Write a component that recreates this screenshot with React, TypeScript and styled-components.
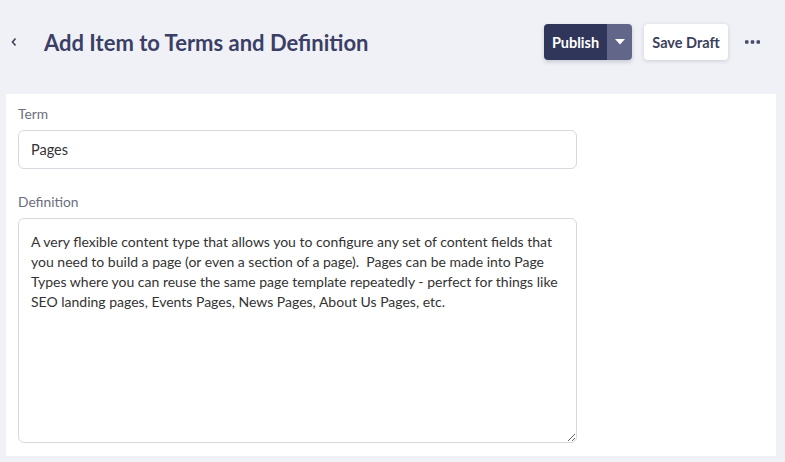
import React from "react";
import styled, { createGlobalStyle } from "styled-components";

const Global = createGlobalStyle`
  html, body { margin: 0; padding: 0; background: #f0f1f6; }
  body { font-family: "Lato", "Open Sans", sans-serif; }
`;

const Page = styled.div`
  width: 785px;
  height: 462px;
  background: #f0f1f6;
  display: flex;
  flex-direction: column;
  box-sizing: border-box;
  padding: 0 9px 6px 6px;
`;

const Header = styled.header`
  height: 94px;
  display: flex;
  align-items: center;
  padding: 0 16px 10px 4px;
  box-sizing: border-box;
`;

const Back = styled.button`
  background: none;
  border: 0;
  padding: 0;
  width: 12px;
  display: flex;
  align-items: center;
  color: #3b3f5c;
  cursor: pointer;
`;

const Title = styled.h1`
  margin: 0 0 0 22px;
  font-size: 22px;
  font-weight: 700;
  color: #3b3f66;
  flex: 1;
`;

const Actions = styled.div`
  display: flex;
  align-items: center;
  gap: 12px;
`;

const Split = styled.div`
  display: flex;
  height: 36px;
  border-radius: 4px;
  overflow: hidden;
  box-shadow: 0 2px 4px rgba(40, 45, 80, 0.2);
`;

const PublishBtn = styled.button`
  background: #2f3659;
  color: #fff;
  border: 0;
  font-family: inherit;
  font-weight: 700;
  font-size: 14.5px;
  padding: 0 6px;
  width: 63px;
`;

const Caret = styled.button`
  background: #62678a;
  border: 0;
  width: 25px;
  display: flex;
  align-items: center;
  justify-content: center;
  padding: 0;
`;

const DraftBtn = styled.button`
  height: 36px;
  width: 84px;
  background: #fff;
  border: 0;
  border-radius: 4px;
  box-shadow: 0 1px 4px rgba(40, 45, 80, 0.18);
  font-family: inherit;
  font-weight: 700;
  font-size: 14.5px;
  color: #3b3f5c;
  padding: 0;
`;

const More = styled.button`
  background: none;
  border: 0;
  padding: 0 0 0 5px;
  display: flex;
  align-items: center;
`;

const Panel = styled.main`
  flex: 1;
  background: #fff;
  padding: 12px 12px 0 12px;
  display: flex;
  flex-direction: column;
`;

const Field = styled.div<{ $gap?: number }>`
  display: flex;
  flex-direction: column;
  width: 559px;
  margin-bottom: ${(p) => p.$gap ?? 0}px;
`;

const Label = styled.label`
  font-size: 13.8px;
  line-height: 16px;
  color: #6b6e7d;
  margin-bottom: 8px;
`;

const Input = styled.input`
  height: 39px;
  box-sizing: border-box;
  border: 1px solid #d7d9df;
  border-radius: 6px;
  padding: 0 12px;
  font-family: inherit;
  font-size: 14.5px;
  color: #333;
  outline: none;
`;

const TextArea = styled.textarea`
  height: 225px;
  box-sizing: border-box;
  border: 1px solid #d7d9df;
  border-radius: 6px;
  padding: 13px 12px;
  font-family: inherit;
  font-size: 14px;
  line-height: 20px;
  color: #333;
  outline: none;
  resize: vertical;
`;

const text =
  "A very flexible content type that allows you to configure any set of content fields that you need to build a page (or even a section of a page).  Pages can be made into Page Types where you can reuse the same page template repeatedly - perfect for things like SEO landing pages, Events Pages, News Pages, About Us Pages, etc.";

export default function App() {
  return (
    <>
      <Global />
      <Page>
        <Header>
          <Back aria-label="Back">
            <svg width="8" height="10" viewBox="0 0 8 10">
              <path d="M5.5 1.5 L2.5 5 L5.5 8.5" fill="none" stroke="#3b3f5c" strokeWidth="1.6" />
            </svg>
          </Back>
          <Title>Add Item to Terms and Definition</Title>
          <Actions>
            <Split>
              <PublishBtn>Publish</PublishBtn>
              <Caret aria-label="More publish options">
                <svg width="10" height="6" viewBox="0 0 10 6">
                  <path d="M0 0 H10 L5 5.5 Z" fill="#fff" />
                </svg>
              </Caret>
            </Split>
            <DraftBtn>Save Draft</DraftBtn>
            <More aria-label="More">
              <svg width="15" height="4" viewBox="0 0 15 4">
                <rect x="0" y="0.25" width="3.5" height="3.5" rx="0.8" fill="#454a6c" />
                <rect x="5.75" y="0.25" width="3.5" height="3.5" rx="0.8" fill="#454a6c" />
                <rect x="11.5" y="0.25" width="3.5" height="3.5" rx="0.8" fill="#454a6c" />
              </svg>
            </More>
          </Actions>
        </Header>
        <Panel>
          <Field $gap={25}>
            <Label>Term</Label>
            <Input defaultValue="Pages" />
          </Field>
          <Field>
            <Label>Definition</Label>
            <TextArea defaultValue={text} />
          </Field>
        </Panel>
      </Page>
    </>
  );
}
